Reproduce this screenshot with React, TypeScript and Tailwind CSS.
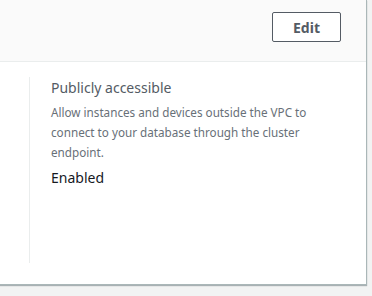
export default function App() {
  return (
    <div
      className="h-[296px] w-[372px] overflow-hidden bg-[#f2f3f3]"
      style={{ fontFamily: '"Noto Sans", "Open Sans", sans-serif' }}
    >
      <div className="flex h-[285px] w-[367px] flex-col border-r border-b border-[#aab7b8] bg-white shadow-[0_1px_1px_0_rgba(0,28,36,0.3)]">
        {/* Header */}
        <div className="flex h-[62px] shrink-0 items-start justify-end border-b border-[#eaeded] bg-[#fafafa] pt-3 pr-[25px]">
          <button className="h-[30px] w-[69px] rounded-[2px] border border-[#545b64] bg-white text-[14px] font-bold text-[#545b64]">
            Edit
          </button>
        </div>

        {/* Body */}
        <div className="flex flex-1 pt-[15px] pb-[21px] pl-[29px]">
          <div className="w-[290px] border-l border-[#eaeded] pl-[21px]">
            <div className="mt-[1px] text-[14px] leading-[20px] text-[#545b64]">Publicly accessible</div>
            <p className="mt-[4px] w-[262px] text-[11.7px] leading-[20px] text-[#687078]">
              Allow instances and devices outside the VPC to connect to your database through the cluster endpoint.
            </p>
            <div className="mt-[5px] text-[14px] leading-[22px] text-[#16191f]">Enabled</div>
          </div>
        </div>
      </div>
    </div>
  );
}
